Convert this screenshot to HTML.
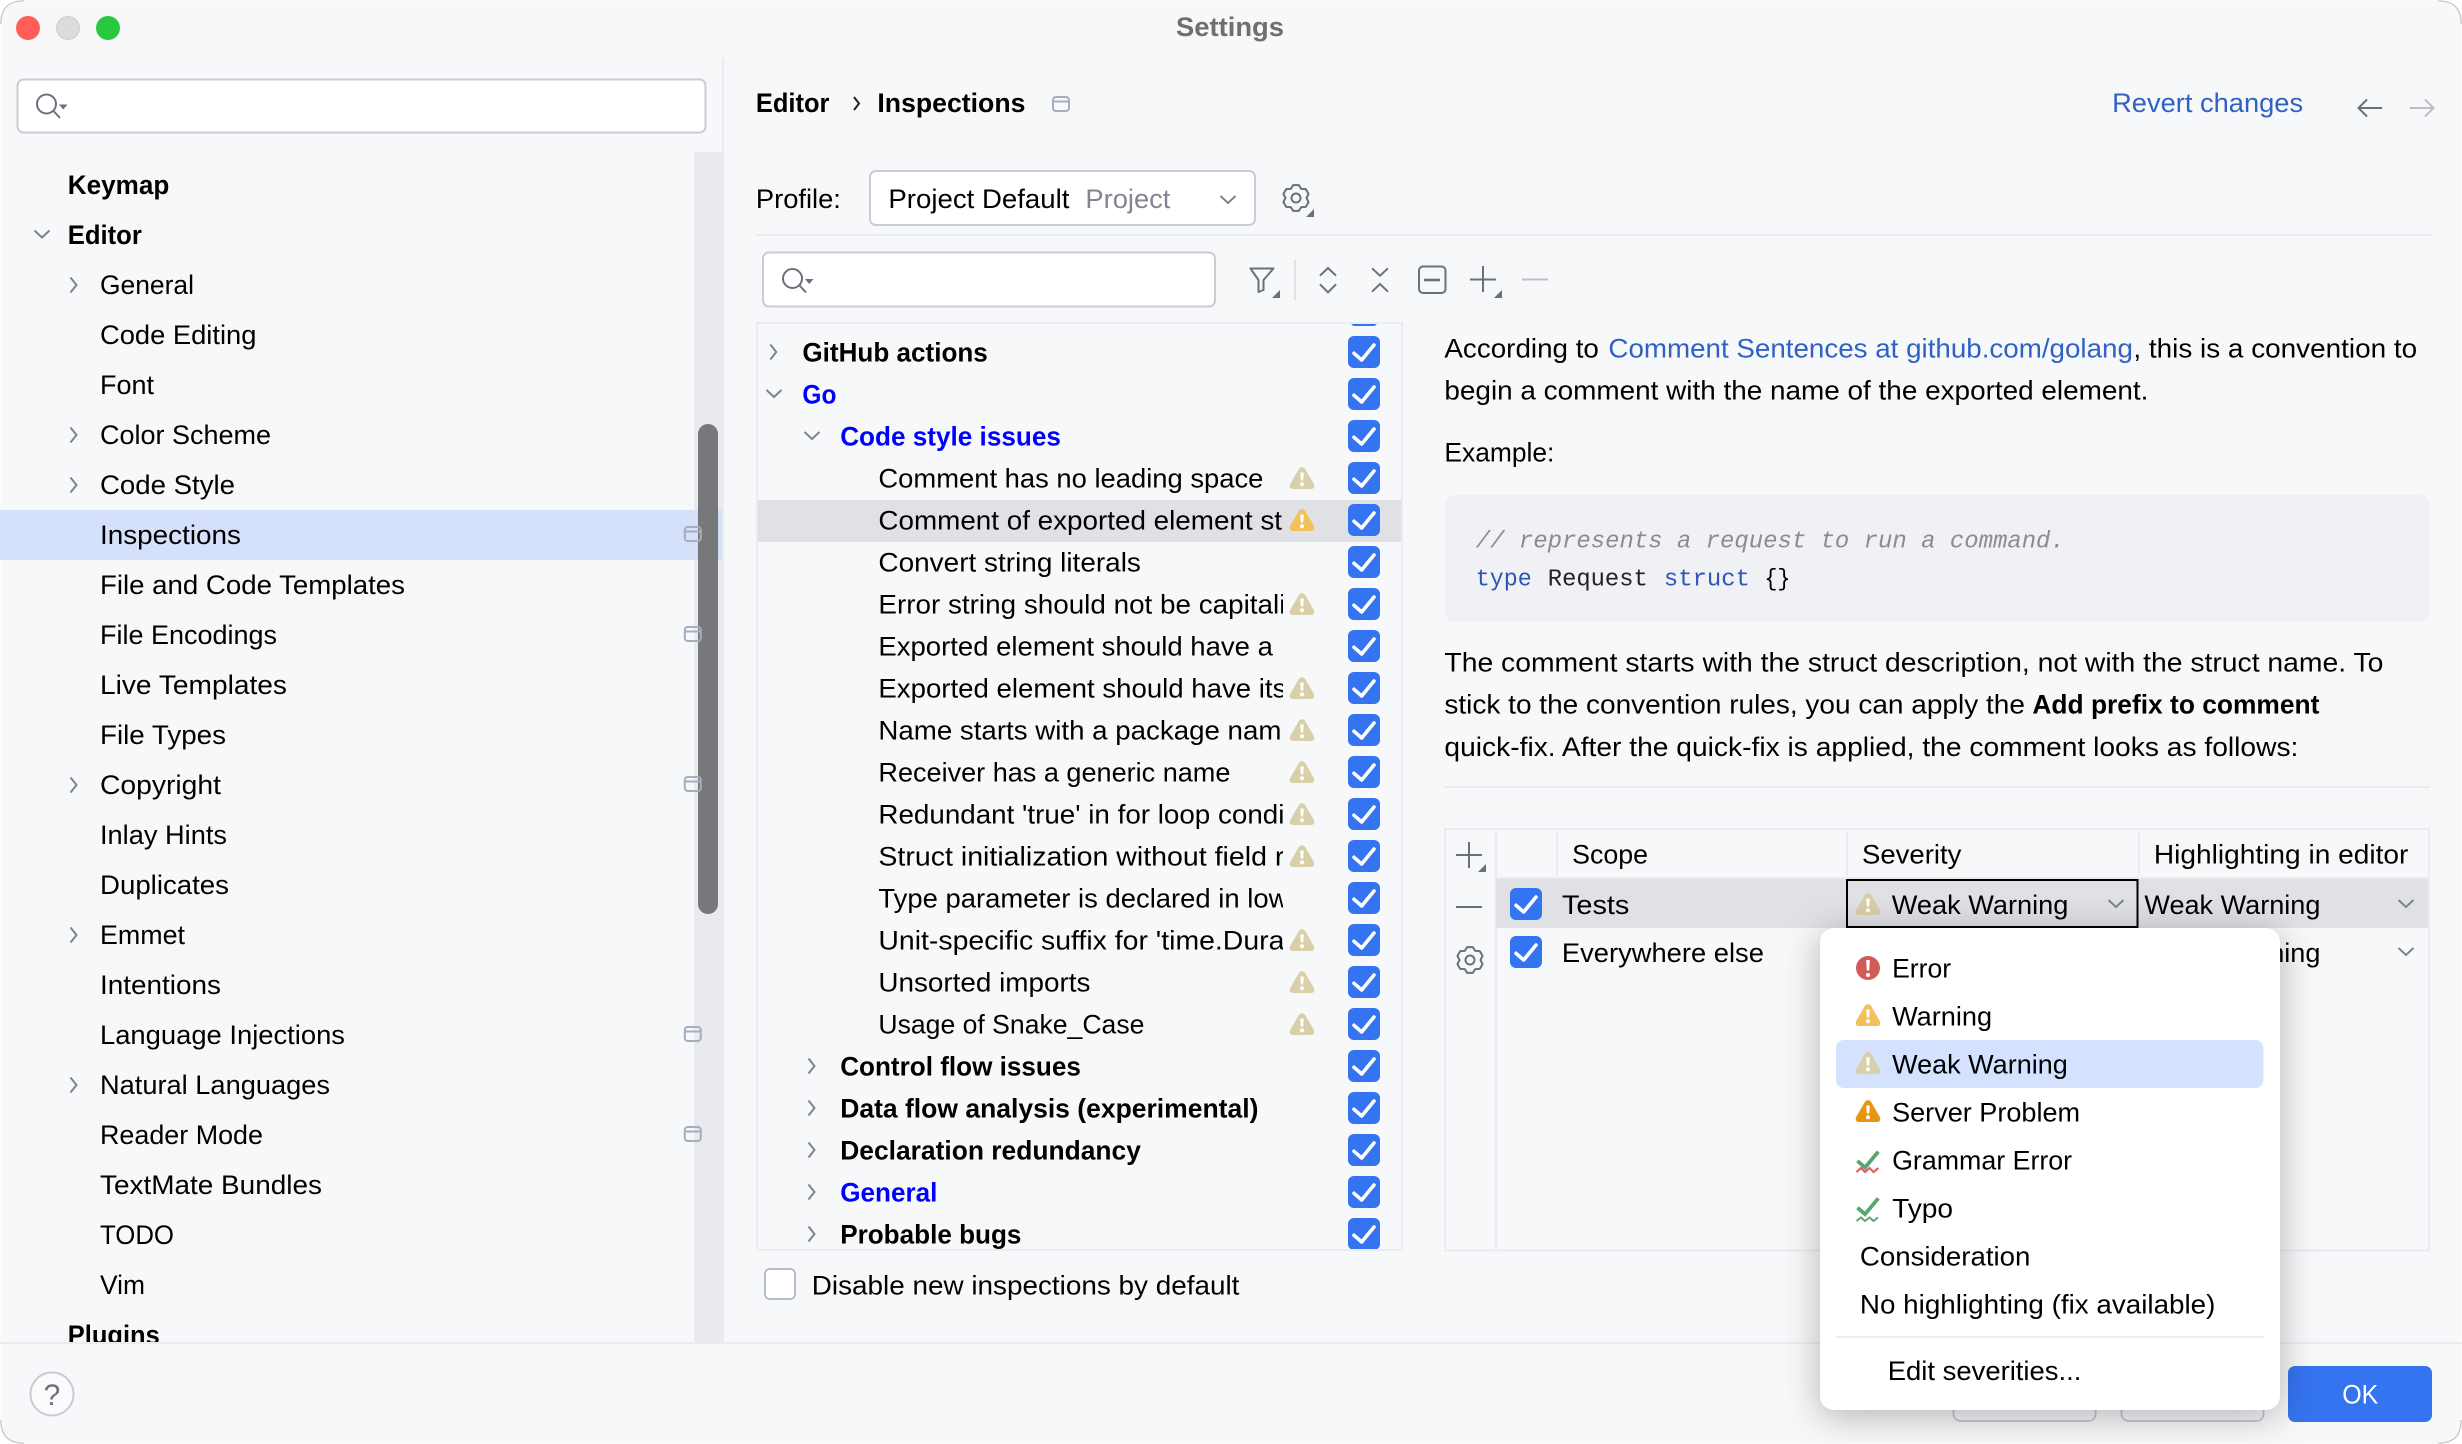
<!DOCTYPE html>
<html><head><meta charset="utf-8"><title>Settings</title>
<style>
html,body{margin:0;padding:0;background:#fff}
svg{display:block}
text{font-family:"Liberation Sans",sans-serif;font-size:27px;fill:#000;white-space:pre;transform:translate(-0.6px,0)}
.b{font-weight:700}
.bl{font-weight:700;fill:#0000ff}
.lnk{fill:#2f62c4}
.m{font-family:"Liberation Mono",monospace;font-size:24px}
</style></head><body>
<svg xmlns="http://www.w3.org/2000/svg" width="2462" height="1444" viewBox="0 0 2462 1444">
<defs>
<g id="cb"><rect width="32" height="32" rx="6" fill="#3574f0"/><path d="M6,17.3 L13.7,24 L26,9" fill="none" stroke="#fff" stroke-width="3.6" stroke-linecap="round" stroke-linejoin="round"/></g>
<path id="tri" d="M-3,1.8 Q0,-1.6 3,1.8 L11.3,16 Q14.2,22 8.5,22 L-8.5,22 Q-14.2,22 -11.3,16 Z"/>
<path id="ex" d="M-1.8,5.5 H1.8 L1.2,13.5 H-1.2 Z" fill="#fff"/>
<g id="ww"><use href="#tri" fill="#d9cfa9"/><use href="#ex"/><circle cy="17.3" r="2" fill="#fff"/></g>
<g id="sw"><use href="#tri" fill="#f2c15a"/><use href="#ex"/><circle cy="17.3" r="2" fill="#fff"/></g>
<g id="sp"><use href="#tri" fill="#e8950f"/><use href="#ex"/><circle cy="17.3" r="2" fill="#fff"/></g>
<path id="cr" d="M-3,-7.5 L3,0 L-3,7.5" fill="none" stroke="#7f8391" stroke-width="2"/>
<path id="cd" d="M-7.5,-3.5 L0,3.5 L7.5,-3.5" fill="none" stroke="#7f8391" stroke-width="2"/>
<g id="pi" fill="none" stroke="#a8adbd" stroke-width="2"><rect x="-8" y="-7" width="16" height="14" rx="3"/><path d="M-8,-2.5 H8"/></g>
<g id="gear" fill="none" stroke="#6c707e" stroke-width="2" stroke-linejoin="round"><path d="M-2.74,-12.9 L2.74,-12.9 L5.25,-9.09 L9.81,-8.83 L12.55,-4.08 L10.5,0 L12.55,4.08 L9.81,8.83 L5.25,9.09 L2.74,12.9 L-2.74,12.9 L-5.25,9.09 L-9.81,8.83 L-12.55,4.08 L-10.5,0 L-12.55,-4.08 L-9.81,-8.83 L-5.25,-9.09 Z"/><circle r="4.5"/></g>
<g id="search"><circle cx="46.5" cy="104" r="9.5" fill="none" stroke="#6c707e" stroke-width="2"/><path d="M53.5,111 L60,118" stroke="#6c707e" stroke-width="2"/><path d="M59,104.5 H67.5 L63.2,109.5 Z" fill="#6c707e"/></g>
<clipPath id="treeclip"><rect x="860" y="480" width="423" height="620"/></clipPath>
</defs>

<rect width="2462" height="1444" fill="#fff"/>
<rect x="0.5" y="0.5" width="2461" height="1443" rx="24" fill="#f7f8fa"/>

<!-- title bar -->
<circle cx="28" cy="28" r="12" fill="#ff5f57"/>
<circle cx="68" cy="28" r="11.5" fill="#dcdcdc" stroke="#cfcfcf"/>
<circle cx="108" cy="28" r="12" fill="#28c840"/>
<text x="1176.6" y="36" class="b" style="fill:#6f6f70" textLength="108" lengthAdjust="spacingAndGlyphs">Settings</text>

<!-- sidebar -->
<rect x="722" y="58" width="2" height="1285" fill="#ebecf0"/>
<rect x="694" y="152" width="28" height="1191" fill="#e9eaed"/>
<rect x="0" y="510" width="722" height="50" fill="#d5e1fb"/>
<rect x="698" y="424" width="20" height="490" rx="10" fill="#77787a"/>
<rect x="17.5" y="79.5" width="688" height="53" rx="6" fill="#fff" stroke="#c9ccd6" stroke-width="2"/>
<use href="#search"/>

<g>
<text x="68.4" y="194" class="b" textLength="101.5" lengthAdjust="spacingAndGlyphs">Keymap</text>
<text x="68.4" y="244" class="b" textLength="74" lengthAdjust="spacingAndGlyphs">Editor</text>
<text x="100.6" y="294" textLength="94" lengthAdjust="spacingAndGlyphs">General</text>
<text x="100.6" y="344" textLength="156.4" lengthAdjust="spacingAndGlyphs">Code Editing</text>
<text x="100.6" y="394" textLength="54" lengthAdjust="spacingAndGlyphs">Font</text>
<text x="100.6" y="444" textLength="171" lengthAdjust="spacingAndGlyphs">Color Scheme</text>
<text x="100.6" y="494" textLength="135" lengthAdjust="spacingAndGlyphs">Code Style</text>
<text x="100.6" y="544" textLength="141" lengthAdjust="spacingAndGlyphs">Inspections</text>
<text x="100.6" y="594" textLength="305" lengthAdjust="spacingAndGlyphs">File and Code Templates</text>
<text x="100.6" y="644" textLength="177" lengthAdjust="spacingAndGlyphs">File Encodings</text>
<text x="100.6" y="694" textLength="187" lengthAdjust="spacingAndGlyphs">Live Templates</text>
<text x="100.6" y="744" textLength="126" lengthAdjust="spacingAndGlyphs">File Types</text>
<text x="100.6" y="794" textLength="121" lengthAdjust="spacingAndGlyphs">Copyright</text>
<text x="100.6" y="844" textLength="127" lengthAdjust="spacingAndGlyphs">Inlay Hints</text>
<text x="100.6" y="894" textLength="129" lengthAdjust="spacingAndGlyphs">Duplicates</text>
<text x="100.6" y="944" textLength="85" lengthAdjust="spacingAndGlyphs">Emmet</text>
<text x="100.6" y="994" textLength="121" lengthAdjust="spacingAndGlyphs">Intentions</text>
<text x="100.6" y="1044" textLength="245" lengthAdjust="spacingAndGlyphs">Language Injections</text>
<text x="100.6" y="1094" textLength="230" lengthAdjust="spacingAndGlyphs">Natural Languages</text>
<text x="100.6" y="1144" textLength="163" lengthAdjust="spacingAndGlyphs">Reader Mode</text>
<text x="100.6" y="1194" textLength="222" lengthAdjust="spacingAndGlyphs">TextMate Bundles</text>
<text x="100.6" y="1244" textLength="74" lengthAdjust="spacingAndGlyphs">TODO</text>
<text x="100.6" y="1294" textLength="45" lengthAdjust="spacingAndGlyphs">Vim</text>
<text x="68.4" y="1344" class="b" textLength="92" lengthAdjust="spacingAndGlyphs">Plugins</text>
</g>
<use href="#cd" x="42" y="234"/>
<use href="#cr" x="73.5" y="285"/>
<use href="#cr" x="73.5" y="435"/>
<use href="#cr" x="73.5" y="485"/>
<use href="#cr" x="73.5" y="785"/>
<use href="#cr" x="73.5" y="935"/>
<use href="#cr" x="73.5" y="1085"/>
<use href="#pi" x="692.8" y="534"/>
<use href="#pi" x="692.8" y="634"/>
<use href="#pi" x="692.8" y="784"/>
<use href="#pi" x="692.8" y="1034"/>
<use href="#pi" x="692.8" y="1134"/>

<!-- breadcrumb -->
<text x="756.5" y="112" class="b" textLength="73.5" lengthAdjust="spacingAndGlyphs">Editor</text>
<path d="M854,97 L859,103.5 L854,110" fill="none" stroke="#222" stroke-width="2"/>
<text x="878" y="112" class="b" textLength="148" lengthAdjust="spacingAndGlyphs">Inspections</text>
<use href="#pi" x="1061" y="104"/>
<text x="2112.7" y="112" class="lnk" textLength="191" lengthAdjust="spacingAndGlyphs">Revert changes</text>
<path d="M2382,108 H2359 M2367,99.5 L2358.5,108 L2367,116.5" fill="none" stroke="#6c707e" stroke-width="2"/>
<path d="M2410,108 H2433 M2425,99.5 L2433.5,108 L2425,116.5" fill="none" stroke="#bcbec4" stroke-width="2"/>

<!-- profile -->
<text x="756.5" y="208" textLength="85" lengthAdjust="spacingAndGlyphs">Profile:</text>
<rect x="870" y="171" width="385" height="54" rx="6" fill="#fff" stroke="#c9ccd6" stroke-width="2"/>
<text x="889" y="208" textLength="181" lengthAdjust="spacingAndGlyphs">Project Default</text>
<text x="1086" y="208" style="fill:#818594" textLength="85" lengthAdjust="spacingAndGlyphs">Project</text>
<use href="#cd" x="1228" y="199.5"/>
<use href="#gear" x="1296" y="198"/>
<path d="M1314,209 V217 H1306 Z" fill="#6c707e"/>
<rect x="756" y="234" width="1676" height="2" fill="#ebecf0"/>

<!-- tree search + toolbar -->
<rect x="763" y="252.5" width="452" height="54" rx="6" fill="#fff" stroke="#c9ccd6" stroke-width="2"/>
<use href="#search" x="746" y="174.5"/>
<path d="M1250.5,268.5 H1273.5 L1263.5,280 V290 L1258.5,292 V280 Z" fill="none" stroke="#6c707e" stroke-width="2" stroke-linejoin="round"/>
<path d="M1280,290 V298 H1272 Z" fill="#6c707e"/>
<rect x="1294" y="260" width="2" height="40" fill="#dfe1e5"/>
<path d="M1320,275.7 L1328,268 L1336,275.7 M1320,284.3 L1328,292.3 L1336,284.3" fill="none" stroke="#6c707e" stroke-width="2"/>
<path d="M1372,268.3 L1380,275.7 L1388,268.3 M1372,291.7 L1380,284 L1388,291.7" fill="none" stroke="#6c707e" stroke-width="2"/>
<rect x="1419" y="266.5" width="26.5" height="26.5" rx="4" fill="none" stroke="#6c707e" stroke-width="2"/>
<path d="M1424,280 H1440" stroke="#6c707e" stroke-width="2.6"/>
<path d="M1470,279.5 H1496 M1483,266 V292" fill="none" stroke="#6c707e" stroke-width="2"/>
<path d="M1502,290 V298 H1494 Z" fill="#6c707e"/>
<path d="M1522,279.5 H1548" stroke="#bdbfc4" stroke-width="2"/>

<!-- tree -->
<rect x="758" y="500" width="643" height="42" fill="#dfe1e5"/>
<path d="M1351,323.5 H1377 Q1376,326 1373,326 H1355 Q1352,326 1351,323.5Z" fill="#3574f0"/>
<g>
<text x="803" y="361.5" class="b" textLength="185.4" lengthAdjust="spacingAndGlyphs">GitHub actions</text>
<text x="803" y="403.5" class="bl" textLength="34" lengthAdjust="spacingAndGlyphs">Go</text>
<text x="840.8" y="445.5" class="bl" textLength="220.7" lengthAdjust="spacingAndGlyphs">Code style issues</text>
<text x="879" y="487.5" textLength="385" lengthAdjust="spacingAndGlyphs">Comment has no leading space</text>
<g clip-path="url(#treeclip)">
<text x="879" y="529.5" textLength="403.6" lengthAdjust="spacingAndGlyphs">Comment of exported element st</text>
<text x="879" y="571.5" textLength="262.5" lengthAdjust="spacingAndGlyphs">Convert string literals</text>
<text x="879" y="613.5" textLength="407" lengthAdjust="spacingAndGlyphs">Error string should not be capitali</text>
<text x="879" y="655.5" textLength="394.5" lengthAdjust="spacingAndGlyphs">Exported element should have a</text>
<text x="879" y="697.5" textLength="408" lengthAdjust="spacingAndGlyphs">Exported element should have its</text>
<text x="879" y="739.5" textLength="403" lengthAdjust="spacingAndGlyphs">Name starts with a package nam</text>
<text x="879" y="781.5" textLength="352" lengthAdjust="spacingAndGlyphs">Receiver has a generic name</text>
<text x="879" y="823.5" textLength="406" lengthAdjust="spacingAndGlyphs">Redundant 'true' in for loop condi</text>
<text x="879" y="865.5" textLength="406" lengthAdjust="spacingAndGlyphs">Struct initialization without field r</text>
<text x="879" y="907.5" textLength="410" lengthAdjust="spacingAndGlyphs">Type parameter is declared in low</text>
<text x="879" y="949.5" textLength="406" lengthAdjust="spacingAndGlyphs">Unit-specific suffix for 'time.Dura</text>
<text x="879" y="991.5" textLength="212" lengthAdjust="spacingAndGlyphs">Unsorted imports</text>
<text x="879" y="1033.5" textLength="266" lengthAdjust="spacingAndGlyphs">Usage of Snake_Case</text>
</g>
<text x="840.8" y="1075.5" class="b" textLength="240.7" lengthAdjust="spacingAndGlyphs">Control flow issues</text>
<text x="840.8" y="1117.5" class="b" textLength="418.2" lengthAdjust="spacingAndGlyphs">Data flow analysis (experimental)</text>
<text x="840.8" y="1159.5" class="b" textLength="300.7" lengthAdjust="spacingAndGlyphs">Declaration redundancy</text>
<text x="840.8" y="1201.5" class="bl" textLength="97.2" lengthAdjust="spacingAndGlyphs">General</text>
<text x="840.8" y="1243.5" class="b" textLength="181.2" lengthAdjust="spacingAndGlyphs">Probable bugs</text>
</g>
<use href="#cr" x="773.3" y="352"/>
<use href="#cd" x="774" y="393.5"/>
<use href="#cd" x="812" y="435.5"/>
<use href="#cr" x="811.5" y="1066"/>
<use href="#cr" x="811.5" y="1108"/>
<use href="#cr" x="811.5" y="1150"/>
<use href="#cr" x="811.5" y="1192"/>
<use href="#cr" x="811.5" y="1234"/>
<use href="#ww" x="1302" y="467"/>
<use href="#sw" x="1302" y="509"/>
<use href="#ww" x="1302" y="593"/>
<use href="#ww" x="1302" y="677"/>
<use href="#ww" x="1302" y="719"/>
<use href="#ww" x="1302" y="761"/>
<use href="#ww" x="1302" y="803"/>
<use href="#ww" x="1302" y="845"/>
<use href="#ww" x="1302" y="929"/>
<use href="#ww" x="1302" y="971"/>
<use href="#ww" x="1302" y="1013"/>
<use href="#cb" x="1348" y="336"/><use href="#cb" x="1348" y="378"/><use href="#cb" x="1348" y="420"/><use href="#cb" x="1348" y="462"/><use href="#cb" x="1348" y="504"/><use href="#cb" x="1348" y="546"/><use href="#cb" x="1348" y="588"/><use href="#cb" x="1348" y="630"/><use href="#cb" x="1348" y="672"/><use href="#cb" x="1348" y="714"/><use href="#cb" x="1348" y="756"/><use href="#cb" x="1348" y="798"/><use href="#cb" x="1348" y="840"/><use href="#cb" x="1348" y="882"/><use href="#cb" x="1348" y="924"/><use href="#cb" x="1348" y="966"/><use href="#cb" x="1348" y="1008"/><use href="#cb" x="1348" y="1050"/><use href="#cb" x="1348" y="1092"/><use href="#cb" x="1348" y="1134"/><use href="#cb" x="1348" y="1176"/><use href="#cb" x="1348" y="1218"/>
<rect x="750" y="1249" width="660" height="10" fill="#f7f8fa"/>
<rect x="757" y="323" width="645" height="927" fill="none" stroke="#ebecf0" stroke-width="2"/>

<!-- disable checkbox -->
<rect x="765" y="1269" width="30" height="30" rx="5" fill="#fff" stroke="#b9bdc9" stroke-width="2"/>
<text x="812.4" y="1294.5" textLength="427.6" lengthAdjust="spacingAndGlyphs">Disable new inspections by default</text>

<!-- description -->
<text x="1445" y="357.6" textLength="154.5" lengthAdjust="spacingAndGlyphs">According to</text>
<text x="1609" y="357.6" class="lnk" textLength="524.5" lengthAdjust="spacingAndGlyphs">Comment Sentences at github.com/golang</text>
<text x="2134" y="357.6" textLength="283.7" lengthAdjust="spacingAndGlyphs">, this is a convention to</text>
<text x="1445" y="399.6" textLength="704" lengthAdjust="spacingAndGlyphs">begin a comment with the name of the exported element.</text>
<text x="1445" y="461.6" textLength="110" lengthAdjust="spacingAndGlyphs">Example:</text>
<rect x="1445" y="495" width="985" height="127" rx="10" fill="#f0f1f4"/>
<text x="1476.4" y="547.6" class="m" style="font-style:italic;fill:#8c8c8c" textLength="589" lengthAdjust="spacingAndGlyphs">// represents a request to run a command.</text>
<text x="1476.4" y="585.6" class="m" style="fill:#2f55b5" textLength="56" lengthAdjust="spacingAndGlyphs">type</text>
<text x="1548.4" y="585.6" class="m" style="fill:#222" textLength="100" lengthAdjust="spacingAndGlyphs">Request</text>
<text x="1664.5" y="585.6" class="m" style="fill:#2f55b5" textLength="86" lengthAdjust="spacingAndGlyphs">struct</text>
<text x="1765" y="585.6" class="m" textLength="26" lengthAdjust="spacingAndGlyphs">{}</text>
<text x="1445" y="671.5" textLength="939" lengthAdjust="spacingAndGlyphs">The comment starts with the struct description, not with the struct name. To</text>
<text x="1445" y="713.5" textLength="580.5" lengthAdjust="spacingAndGlyphs">stick to the convention rules, you can apply the</text>
<text x="2033" y="713.5" class="b" textLength="287" lengthAdjust="spacingAndGlyphs">Add prefix to comment</text>
<text x="1445" y="756" textLength="854" lengthAdjust="spacingAndGlyphs">quick-fix. After the quick-fix is applied, the comment looks as follows:</text>
<rect x="1444" y="786" width="986" height="2" fill="#ebecf0"/>

<!-- severity table -->
<rect x="1445" y="829" width="984" height="421.5" fill="none" stroke="#ebecf0" stroke-width="2"/>
<rect x="1495" y="829" width="2" height="421" fill="#ebecf0"/>
<rect x="1496" y="877" width="932" height="2" fill="#ebecf0"/>
<rect x="1556" y="832" width="2" height="43" fill="#ebecf0"/>
<rect x="1846" y="832" width="2" height="43" fill="#ebecf0"/>
<rect x="2138" y="832" width="2" height="43" fill="#ebecf0"/>
<path d="M1456,855 H1482 M1469,842 V868" fill="none" stroke="#6c707e" stroke-width="2"/>
<path d="M1486,864 V872 H1478 Z" fill="#6c707e"/>
<path d="M1456,907 H1482" stroke="#6c707e" stroke-width="2"/>
<use href="#gear" x="1470" y="960"/>
<text x="1572.7" y="863.4" textLength="76" lengthAdjust="spacingAndGlyphs">Scope</text>
<text x="1862.6" y="863.4" textLength="99.4" lengthAdjust="spacingAndGlyphs">Severity</text>
<text x="2154.5" y="863.4" textLength="254.5" lengthAdjust="spacingAndGlyphs">Highlighting in editor</text>
<rect x="1496" y="879" width="932" height="49" fill="#dfe1e5"/>
<use href="#cb" x="1510" y="888"/>
<use href="#cb" x="1510" y="936"/>
<text x="1562.5" y="914" textLength="67.5" lengthAdjust="spacingAndGlyphs">Tests</text>
<text x="1562.5" y="962" textLength="202" lengthAdjust="spacingAndGlyphs">Everywhere else</text>
<rect x="1847" y="880" width="290.5" height="47" fill="#dfe1e5" stroke="#000" stroke-width="2"/>
<use href="#ww" x="1868" y="893"/>
<text x="1892.4" y="914" textLength="176.6" lengthAdjust="spacingAndGlyphs">Weak Warning</text>
<use href="#cd" x="2116" y="903.5"/>
<text x="2145" y="914" textLength="176" lengthAdjust="spacingAndGlyphs">Weak Warning</text>
<use href="#cd" x="2406" y="903.5"/>
<text x="2145" y="962" textLength="176" lengthAdjust="spacingAndGlyphs">Weak Warning</text>
<use href="#cd" x="2406" y="951.5"/>

<!-- bottom bar -->
<rect x="1" y="1343" width="2460" height="78" fill="#f7f8fa"/>
<path d="M1,1421 H2461 V1420 Q2461,1443 2438,1443 H24 Q1,1443 1,1420 Z" fill="#f7f8fa"/>
<rect x="0" y="1342" width="2462" height="2" fill="#ebecf0"/>
<circle cx="52" cy="1394" r="21.5" fill="#fbfbfc" stroke="#c9ccd6" stroke-width="2"/>
<text x="52.6" y="1405" text-anchor="middle" style="font-size:30px;fill:#6c707e">?</text>
<rect x="1953.5" y="1367" width="142" height="54" rx="7" fill="#f7f8fa" stroke="#c9ccd6" stroke-width="2"/>
<rect x="2121.5" y="1367" width="142" height="54" rx="7" fill="#f7f8fa" stroke="#c9ccd6" stroke-width="2"/>
<rect x="2288" y="1366" width="144" height="56" rx="7" fill="#3574f0"/>
<text x="2342.8" y="1403.5" style="fill:#fff" textLength="36" lengthAdjust="spacingAndGlyphs">OK</text>

<!-- window corners -->
<g fill="none" stroke="#c4c5c9" stroke-width="1.2">
<path d="M0.8,24 Q0.8,0.8 24,0.8"/>
<path d="M2438,0.8 Q2461.2,0.8 2461.2,24"/>
<path d="M0.8,1420 Q0.8,1443.2 24,1443.2"/>
<path d="M2438,1443.2 Q2461.2,1443.2 2461.2,1420"/>
</g>

<!-- popup -->
<rect x="1820" y="928" width="460" height="482" rx="14" fill="#fff" style="filter:drop-shadow(0 6px 18px rgba(0,0,0,.28))"/>
<rect x="1836" y="1040" width="427.5" height="48" rx="8" fill="#d4e2ff"/>
<circle cx="1868" cy="968" r="12" fill="#d25a57"/>
<path d="M1866.2,960 H1869.8 L1869.2,970.5 H1866.8 Z" fill="#fff"/>
<circle cx="1868" cy="975" r="2" fill="#fff"/>
<use href="#sw" x="1868" y="1004"/>
<use href="#ww" x="1868" y="1052"/>
<use href="#sp" x="1868" y="1100"/>
<path d="M1857.5,1161 L1865,1167.5 L1878.3,1151.7" fill="none" stroke="#57a66f" stroke-width="3.8"/>
<path d="M1856.5,1172 L1861,1168 L1865,1172 L1869.5,1168 L1873.5,1172 L1878.5,1168" fill="none" stroke="#e0616b" stroke-width="2.2"/>
<path d="M1857.5,1207.7 L1865,1214.2 L1878.3,1198.3" fill="none" stroke="#57a66f" stroke-width="3.8"/>
<path d="M1856.5,1221 L1861,1217.5 L1865,1221 L1869.5,1217.5 L1873.5,1221 L1878,1217.5" fill="none" stroke="#57a66f" stroke-width="1.9"/>
<text x="1892.7" y="977.3" textLength="59" lengthAdjust="spacingAndGlyphs">Error</text>
<text x="1892.7" y="1025.4" textLength="100" lengthAdjust="spacingAndGlyphs">Warning</text>
<text x="1892.7" y="1073.4" textLength="175.7" lengthAdjust="spacingAndGlyphs">Weak Warning</text>
<text x="1892.7" y="1121.5" textLength="188" lengthAdjust="spacingAndGlyphs">Server Problem</text>
<text x="1892.7" y="1169.5" textLength="180" lengthAdjust="spacingAndGlyphs">Grammar Error</text>
<text x="1892.7" y="1217.4" textLength="61" lengthAdjust="spacingAndGlyphs">Typo</text>
<text x="1860.5" y="1265.5" textLength="170.5" lengthAdjust="spacingAndGlyphs">Consideration</text>
<text x="1860.5" y="1313.5" textLength="355.5" lengthAdjust="spacingAndGlyphs">No highlighting (fix available)</text>
<rect x="1836" y="1336" width="427.5" height="2" fill="#ebecf0"/>
<text x="1888.3" y="1380" textLength="193.7" lengthAdjust="spacingAndGlyphs">Edit severities...</text>
</svg>
</body></html>
